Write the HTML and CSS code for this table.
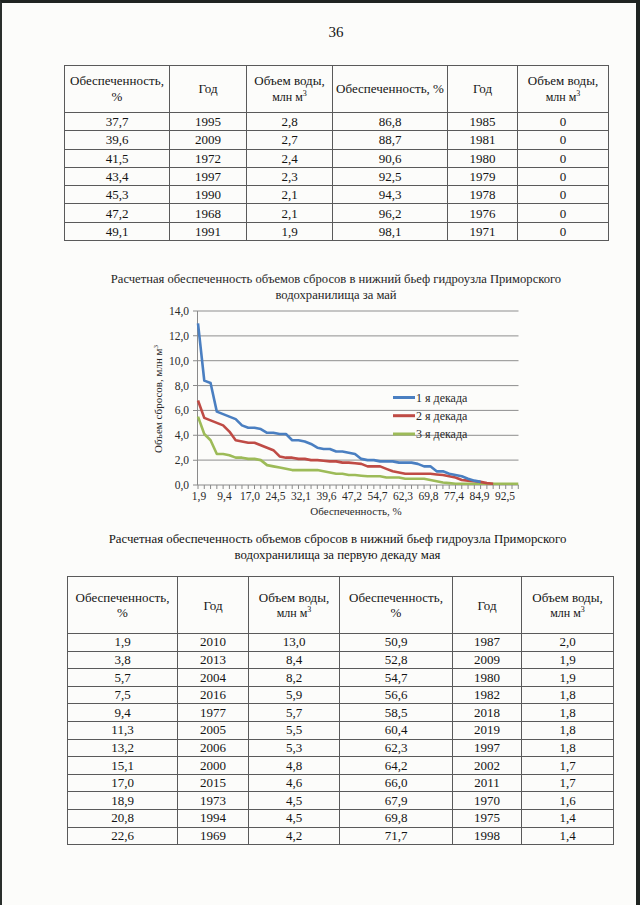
FILE: index.html
```html
<!DOCTYPE html>
<html lang="ru">
<head>
<meta charset="utf-8">
<title>36</title>
<link rel="stylesheet" href="styles.css">
</head>
<body>
<div class="page">
  <div class="pagenum">36</div>

  <table class="t t1">
    <colgroup><col class="c1a"><col class="c1b"><col class="c1c"><col class="c1d"><col class="c1e"><col class="c1f"></colgroup>
    <tr>
      <th>Обеспеченность,<br>%</th>
      <th>Год</th>
      <th>Объем воды,<br><span class="small">млн м<span class="sup">3</span></span></th>
      <th>Обеспеченность, %</th>
      <th>Год</th>
      <th>Объем воды,<br><span class="small">млн м<span class="sup">3</span></span></th>
    </tr>
    <tr><td>37,7</td><td>1995</td><td>2,8</td><td>86,8</td><td>1985</td><td>0</td></tr>
    <tr><td>39,6</td><td>2009</td><td>2,7</td><td>88,7</td><td>1981</td><td>0</td></tr>
    <tr><td>41,5</td><td>1972</td><td>2,4</td><td>90,6</td><td>1980</td><td>0</td></tr>
    <tr><td>43,4</td><td>1997</td><td>2,3</td><td>92,5</td><td>1979</td><td>0</td></tr>
    <tr><td>45,3</td><td>1990</td><td>2,1</td><td>94,3</td><td>1978</td><td>0</td></tr>
    <tr><td>47,2</td><td>1968</td><td>2,1</td><td>96,2</td><td>1976</td><td>0</td></tr>
    <tr><td>49,1</td><td>1991</td><td>1,9</td><td>98,1</td><td>1971</td><td>0</td></tr>
  </table>

  <div class="chart-title">Расчетная обеспеченность объемов сбросов в нижний бьеф гидроузла Приморского<br>водохранилища за май</div>

  <svg class="chart" width="544" height="216" viewBox="64 304 544 216" xmlns="http://www.w3.org/2000/svg">
    <g class="grid">
      <line x1="197" y1="312" x2="518.5" y2="312"/>
      <line x1="197" y1="336.9" x2="518.5" y2="336.9"/>
      <line x1="197" y1="361.7" x2="518.5" y2="361.7"/>
      <line x1="197" y1="386.6" x2="518.5" y2="386.6"/>
      <line x1="197" y1="411.4" x2="518.5" y2="411.4"/>
      <line x1="197" y1="436.3" x2="518.5" y2="436.3"/>
      <line x1="197" y1="461.1" x2="518.5" y2="461.1"/>
    </g>
    <g class="axis">
      <line x1="197.5" y1="312" x2="197.5" y2="486"/>
      <line x1="197" y1="486" x2="518.5" y2="486"/>
      <line class="yticks" x1="195" y1="311.5" x2="195" y2="487"/>
      <line class="xticks" x1="197.5" y1="488" x2="519" y2="488"/>
    </g>
    <g class="ylab">
      <text x="189" y="316">14,0</text>
      <text x="189" y="340.9">12,0</text>
      <text x="189" y="365.7">10,0</text>
      <text x="189" y="390.6">8,0</text>
      <text x="189" y="415.4">6,0</text>
      <text x="189" y="440.3">4,0</text>
      <text x="189" y="465.1">2,0</text>
      <text x="189" y="490">0,0</text>
    </g>
    <g class="xlab">
      <text x="199" y="501">1,9</text>
      <text x="224.5" y="501">9,4</text>
      <text x="250" y="501">17,0</text>
      <text x="275.5" y="501">24,5</text>
      <text x="301" y="501">32,1</text>
      <text x="326.5" y="501">39,6</text>
      <text x="352" y="501">47,2</text>
      <text x="377.5" y="501">54,7</text>
      <text x="403" y="501">62,3</text>
      <text x="428.5" y="501">69,8</text>
      <text x="454" y="501">77,4</text>
      <text x="479.5" y="501">84,9</text>
      <text x="505" y="501">92,5</text>
    </g>
    <text class="xtitle" x="356" y="516">Обеспеченность, %</text>
    <text class="ytitle" transform="translate(162 400) rotate(-90)">Объем сбросов, млн м<tspan class="ysup" dy="-4">3</tspan></text>

    <g transform="translate(198 486) scale(6.28 -12.43)">
      <polyline class="s-green" points="0,5.5 1,4.1 2,3.6 3,2.5 4,2.5 5,2.4 6,2.2 7,2.2 8,2.1 9,2.1 10,2.0 11,1.6 12,1.5 13,1.4 14,1.3 15,1.2 16,1.2 17,1.2 18,1.2 19,1.2 20,1.1 21,1.0 22,0.9 23,0.9 24,0.8 25,0.8 26,0.75 27,0.7 28,0.7 29,0.7 30,0.6 31,0.6 32,0.6 33,0.5 34,0.5 35,0.5 36,0.5 37,0.4 38,0.3 39,0.2 40,0.15 41,0.1 42,0.1 43,0.1 44,0.1 45,0.1 46,0.1 47,0.1 48,0.1 49,0.1 50,0.1 51,0.1"/>
      <polyline class="s-red" points="0,6.8 1,5.4 2,5.2 3,5.0 4,4.8 5,4.3 6,3.6 7,3.5 8,3.4 9,3.4 10,3.2 11,3.0 12,2.8 13,2.3 14,2.2 15,2.2 16,2.1 17,2.1 18,2.0 19,2.0 20,1.95 21,1.9 22,1.9 23,1.8 24,1.8 25,1.75 26,1.7 27,1.5 28,1.5 29,1.5 30,1.3 31,1.1 32,1.0 33,0.9 34,0.9 35,0.9 36,0.9 37,0.9 38,0.85 39,0.8 40,0.7 41,0.6 42,0.4 43,0.35 44,0.3 45,0.25 46,0.15 47,0.1"/>
      <polyline class="s-blue" points="0,13.0 1,8.4 2,8.2 3,5.9 4,5.7 5,5.5 6,5.3 7,4.8 8,4.6 9,4.6 10,4.5 11,4.2 12,4.2 13,4.1 14,4.1 15,3.6 16,3.6 17,3.5 18,3.3 19,3.0 20,2.9 21,2.9 22,2.7 23,2.7 24,2.6 25,2.5 26,2.1 27,2.0 28,2.0 29,1.9 30,1.9 31,1.9 32,1.8 33,1.8 34,1.8 35,1.7 36,1.5 37,1.5 38,1.1 39,1.1 40,0.9 41,0.8 42,0.7 43,0.5 44,0.35 45,0.25"/>
    </g>

    <g class="legend">
      <line class="lg-blue" x1="393" y1="398.5" x2="415" y2="398.5"/>
      <text x="416" y="402.5">1 я декада</text>
      <line class="lg-red" x1="393" y1="416.7" x2="415" y2="416.7"/>
      <text x="416" y="420.7">2 я декада</text>
      <line class="lg-green" x1="393" y1="435" x2="415" y2="435"/>
      <text x="416" y="439">3 я декада</text>
    </g>
  </svg>

  <div class="caption">Расчетная обеспеченность объемов сбросов в нижний бьеф гидроузла Приморского<br>водохранилища за первую декаду мая</div>

  <table class="t t2">
    <colgroup><col class="c2a"><col class="c2b"><col class="c2c"><col class="c2d"><col class="c2e"><col class="c2f"></colgroup>
    <tr>
      <th>Обеспеченность,<br>%</th>
      <th>Год</th>
      <th>Объем воды,<br><span class="small">млн м<span class="sup">3</span></span></th>
      <th>Обеспеченность,<br>%</th>
      <th>Год</th>
      <th>Объем воды,<br><span class="small">млн м<span class="sup">3</span></span></th>
    </tr>
    <tr><td>1,9</td><td>2010</td><td>13,0</td><td>50,9</td><td>1987</td><td>2,0</td></tr>
    <tr><td>3,8</td><td>2013</td><td>8,4</td><td>52,8</td><td>2009</td><td>1,9</td></tr>
    <tr><td>5,7</td><td>2004</td><td>8,2</td><td>54,7</td><td>1980</td><td>1,9</td></tr>
    <tr><td>7,5</td><td>2016</td><td>5,9</td><td>56,6</td><td>1982</td><td>1,8</td></tr>
    <tr><td>9,4</td><td>1977</td><td>5,7</td><td>58,5</td><td>2018</td><td>1,8</td></tr>
    <tr><td>11,3</td><td>2005</td><td>5,5</td><td>60,4</td><td>2019</td><td>1,8</td></tr>
    <tr><td>13,2</td><td>2006</td><td>5,3</td><td>62,3</td><td>1997</td><td>1,8</td></tr>
    <tr><td>15,1</td><td>2000</td><td>4,8</td><td>64,2</td><td>2002</td><td>1,7</td></tr>
    <tr><td>17,0</td><td>2015</td><td>4,6</td><td>66,0</td><td>2011</td><td>1,7</td></tr>
    <tr><td>18,9</td><td>1973</td><td>4,5</td><td>67,9</td><td>1970</td><td>1,6</td></tr>
    <tr><td>20,8</td><td>1994</td><td>4,5</td><td>69,8</td><td>1975</td><td>1,4</td></tr>
    <tr><td>22,6</td><td>1969</td><td>4,2</td><td>71,7</td><td>1998</td><td>1,4</td></tr>
  </table>
</div>
</body>
</html>
```

FILE: styles.css
```css
html, body {
  margin: 0;
  padding: 0;
  background: #fcfcfa;
}

.page {
  width: 640px;
  height: 905px;
  box-sizing: border-box;
  border-top: 3px solid #1f2421;
  border-left: 2px solid #2a2f2c;
  border-right: 4px solid #1f2421;
  padding: 0 28px 0 62px;
  background: #fcfcfa;
  color: #141414;
  font-family: "Liberation Serif", "Times New Roman", serif;
  overflow: hidden;
}

.pagenum {
  padding-top: 21px;
  font-size: 15px;
  line-height: 17px;
  text-align: center;
}

.t {
  border-collapse: collapse;
  table-layout: fixed;
  font-size: 13px;
  color: #141414;
}

.t th,
.t td {
  border: 1px solid #5a5a5a;
  padding: 0;
  text-align: center;
  vertical-align: middle;
  font-weight: normal;
}

.t1 {
  width: 544px;
  margin-top: 24px;
}

.t1 th {
  height: 46px;
  line-height: 16px;
}

.t1 td {
  height: 17.3px;
  line-height: 17px;
}

.c1a { width: 105px; }
.c1b { width: 77px; }
.c1c { width: 86px; }
.c1d { width: 115px; }
.c1e { width: 70px; }
.c1f { width: 91px; }

.small {
  font-size: 12px;
}

.sup {
  font-size: 8px;
  vertical-align: 5px;
  line-height: 0;
}

.chart-title {
  margin-top: 31px;
  font-size: 12.6px;
  line-height: 15.5px;
  text-align: center;
  color: #262626;
}

.chart {
  display: block;
  margin-top: 0;
}

.grid line {
  stroke: #8e8e8e;
  stroke-width: 1;
}

.axis line {
  stroke: #8a8a8a;
  stroke-width: 1;
}

.axis .yticks {
  stroke-width: 4;
  stroke-dasharray: 1 23.86;
}

.axis .xticks {
  stroke-width: 4;
  stroke-dasharray: 1 5.28;
}

.ylab text,
.xlab text,
.xtitle,
.ytitle,
.legend text {
  font-family: "Liberation Serif", "Times New Roman", serif;
  fill: #2a2a2a;
}

.ylab text {
  font-size: 11.5px;
  text-anchor: end;
}

.xlab text {
  font-size: 11.5px;
  text-anchor: middle;
}

.xtitle {
  font-size: 11px;
  text-anchor: middle;
}

.ytitle {
  font-size: 11px;
  text-anchor: middle;
}

.ysup {
  font-size: 7px;
}

.legend text {
  font-size: 12px;
}

polyline {
  fill: none;
  stroke-width: 2.6;
  stroke-linejoin: round;
  vector-effect: non-scaling-stroke;
}

.s-blue { stroke: #4a7fc1; }
.s-red { stroke: #bf4b45; }
.s-green { stroke: #9dbb58; }

.legend line { stroke-width: 3; }
.lg-blue { stroke: #4a7fc1; }
.lg-red { stroke: #bf4b45; }
.lg-green { stroke: #9dbb58; }

.caption {
  margin-top: 13px;
  margin-left: 3px;
  font-size: 12.8px;
  line-height: 15.5px;
  text-align: center;
}

.t2 {
  width: 546px;
  margin-top: 13px;
  margin-left: 3px;
}

.t2 th {
  height: 56px;
  line-height: 15px;
}

.t2 td {
  height: 16.6px;
  line-height: 16px;
}

.c2a { width: 110px; }
.c2b { width: 71px; }
.c2c { width: 91px; }
.c2d { width: 113px; }
.c2e { width: 69px; }
.c2f { width: 92px; }
```
